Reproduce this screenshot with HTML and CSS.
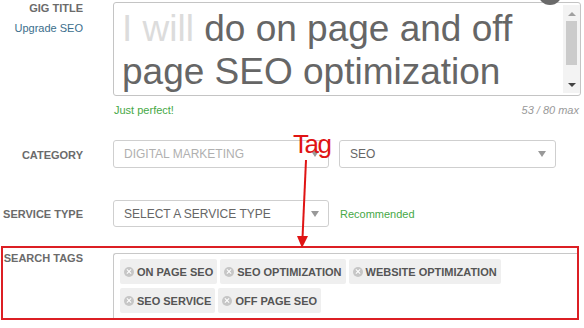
FILE: index.html
```html
<!DOCTYPE html>
<html lang="en">
<head>
    <meta charset="UTF-8">
    <title>Gig Overview</title>
    <link rel="stylesheet" href="styles.css">
</head>
<body>
    <div class="page">
        <div class="avatar-dot"></div>

        <div class="row row-title">
            <div class="label">
                <div>GIG TITLE</div>
                <a class="upgrade" href="#">Upgrade SEO</a>
            </div>
            <div class="field">
                <div class="titlebox">
                    <div class="titletext">
                        <div><span class="prefix">I will</span> <span>do on page and off</span></div>
                        <div>page SEO optimization</div>
                    </div>
                    <div class="scrollbar">
                        <span class="sb-up"></span>
                        <span class="sb-thumb"></span>
                        <span class="sb-down"></span>
                    </div>
                </div>
                <div class="meta">
                    <span class="ok">Just perfect!</span>
                    <span class="count">53 / 80 max</span>
                </div>
            </div>
        </div>

        <div class="row row-category">
            <div class="label">CATEGORY</div>
            <div class="field selects">
                <div class="select muted">DIGITAL MARKETING <span class="caret"></span></div>
                <div class="select">SEO <span class="caret"></span></div>
            </div>
        </div>

        <div class="row row-service">
            <div class="label">SERVICE TYPE</div>
            <div class="field inline">
                <div class="select service">SELECT A SERVICE TYPE <span class="caret"></span></div>
                <span class="ok">Recommended</span>
            </div>
        </div>

        <div class="highlight">
            <div class="row row-tags">
                <div class="label">SEARCH TAGS</div>
                <div class="tagbox">
                    <span class="tag"><i class="x"></i>ON PAGE SEO</span>
                    <span class="tag"><i class="x"></i>SEO OPTIMIZATION</span>
                    <span class="tag"><i class="x"></i>WEBSITE OPTIMIZATION</span>
                    <span class="tag"><i class="x"></i>SEO SERVICE</span>
                    <span class="tag"><i class="x"></i>OFF PAGE SEO</span>
                </div>
            </div>
        </div>

        <!-- annotation drawn over the form -->
        <div class="note">Tag</div>
        <svg class="note-arrow" width="20" height="96" viewBox="0 0 20 96">
            <line x1="11" y1="2" x2="7.5" y2="80" stroke="#e01414" stroke-width="2"/>
            <polygon points="2,78 13,78 7,90" fill="#e01414"/>
        </svg>
    </div>
</body>
</html>
```

FILE: styles.css
```css
body {
    margin: 0;
    background: #fff;
    font-family: "Liberation Sans", Arial, sans-serif;
    color: #666;
}
.page {
    position: relative;
    width: 584px;
    height: 328px;
    overflow: hidden;
    padding-top: 2px;
    box-sizing: border-box;
}
.avatar-dot {
    position: absolute;
    left: 538px;
    top: -19px;
    width: 24px;
    height: 24px;
    border-radius: 50%;
    background: #6a6a6a;
}
.row {
    display: grid;
    grid-template-columns: 83px 1fr;
    column-gap: 30px;
}
.label {
    text-align: right;
    font-size: 11px;
    line-height: 13px;
    font-weight: bold;
    color: #6b6b6b;
}
.upgrade {
    display: block;
    margin-top: 7px;
    font-weight: normal;
    color: #3b6e8c;
    text-decoration: none;
}
.field {
    margin-right: 3px;
}
.titlebox {
    display: flex;
    height: 94px;
    box-sizing: border-box;
    border: 1px solid #c4c4c4;
    border-radius: 3px;
}
.titletext {
    flex: 1;
    padding: 4px 0 0 8px;
    font-size: 37px;
    line-height: 43px;
    color: #666;
    white-space: nowrap;
}
.prefix {
    color: #dcdcdc;
}
.scrollbar {
    width: 17px;
    margin: 2px 0;
    background: #f3f3f3;
    display: flex;
    flex-direction: column;
    align-items: center;
}
.sb-up, .sb-down {
    display: block;
    width: 0;
    height: 0;
    border-left: 4px solid transparent;
    border-right: 4px solid transparent;
}
.sb-up {
    margin-top: 7px;
    border-bottom: 4px solid #a0a0a0;
}
.sb-thumb {
    display: block;
    width: 11px;
    height: 44px;
    margin-top: 5px;
    background: #cbcbcb;
}
.sb-down {
    margin-top: auto;
    margin-bottom: 6px;
    border-top: 4px solid #444;
}
.meta {
    display: flex;
    justify-content: space-between;
    margin-top: 8px;
    padding-left: 1px;
    font-size: 11px;
    line-height: 13px;
}
.ok {
    color: #46a846;
    font-size: 11px;
}
.count {
    color: #999;
    font-style: italic;
    margin-right: 2px;
}
.row-category {
    margin-top: 23px;
    align-items: center;
}
.row-category .label, .row-service .label {
    padding-top: 2px;
}
.selects {
    display: grid;
    grid-template-columns: 216px 217px;
    column-gap: 10px;
}
.select {
    display: flex;
    align-items: center;
    justify-content: space-between;
    height: 28px;
    box-sizing: border-box;
    padding: 0 9px 0 10px;
    border: 1px solid #cfcfcf;
    border-radius: 3px;
    font-size: 12px;
    color: #666;
}
.select.muted {
    color: #b0b0b0;
}
.caret {
    width: 0;
    height: 0;
    border-left: 4px solid transparent;
    border-right: 4px solid transparent;
    border-top: 6px solid #999;
}
.row-service {
    margin-top: 32px;
    align-items: center;
}
.inline {
    display: flex;
    align-items: center;
    gap: 11px;
}
.select.service {
    width: 216px;
    height: 27px;
}
.highlight {
    margin: 19px 5px 0 1px;
    height: 74px;
    box-sizing: border-box;
    border: 2px solid #dc1f24;
    overflow: hidden;
}
.row-tags {
    grid-template-columns: 80px 1fr;
    height: 100%;
}
.row-tags .label {
    padding-top: 4px;
}
.tagbox {
    margin-top: 5px;
    padding: 5px 0 0 6px;
    border: 1px solid #c8c8c8;
    border-right: none;
    border-bottom: none;
    border-radius: 3px 0 0 0;
    display: flex;
    flex-wrap: wrap;
    align-content: flex-start;
    gap: 4px 3px;
}
.tag {
    display: inline-flex;
    align-items: center;
    gap: 3px;
    height: 25px;
    padding: 0 4px 0 4px;
    background: #efefef;
    border-radius: 2px;
    font-size: 11px;
    font-weight: bold;
    color: #555;
}
.x {
    position: relative;
    display: inline-block;
    width: 10px;
    height: 10px;
    border-radius: 50%;
    background: #c6c6c6;
}
.x::before, .x::after {
    content: "";
    position: absolute;
    left: 2px;
    top: 4.5px;
    width: 6px;
    height: 1px;
    background: #fff;
    transform: rotate(45deg);
}
.x::after {
    transform: rotate(-45deg);
}
.note {
    position: absolute;
    left: 293px;
    top: 131px;
    font-size: 26px;
    line-height: 26px;
    letter-spacing: -1.5px;
    color: #e01414;
}
.note-arrow {
    position: absolute;
    left: 295px;
    top: 158px;
}
```
